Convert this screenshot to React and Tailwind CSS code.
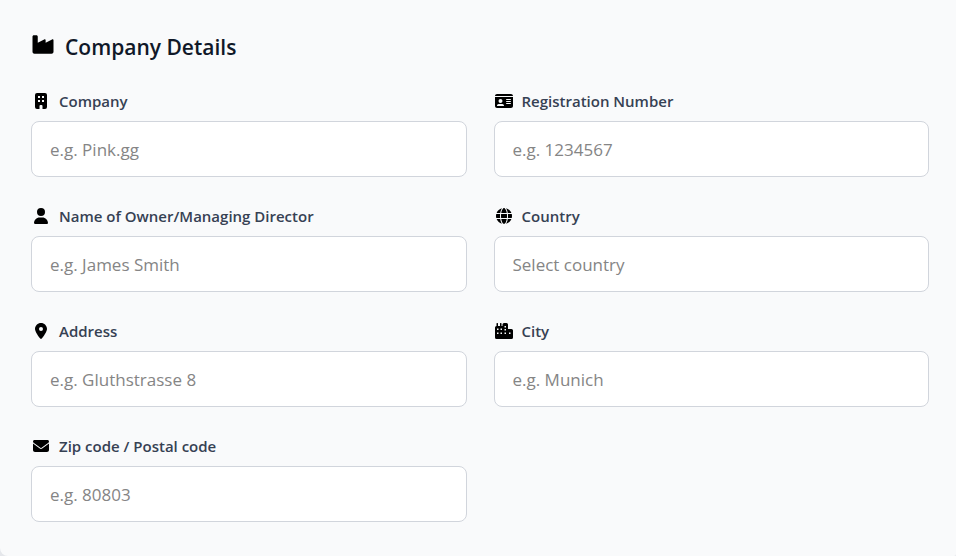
import { FaEnvelope, FaGlobe, FaIdCard, FaIndustry, FaLocationDot, FaUser } from "react-icons/fa6";

const BuildingIcon = ({ className }) => (
  <svg className={className} fill="currentColor" viewBox="0 0 12 16">
    <path
      d="M2 0h8a2 2 0 012 2v12a2 2 0 01-2 2H7.500v-3a1 1 0 00-1-1h-1a1 1 0 00-1 1v3H2a2 2 0 01-2-2V2a2 2 0 012-2zM3 3v2h2V3zm4 0v2h2V3zM3 7v2h2V7zm4 0v2h2V7z"
      fillRule="evenodd"
    />
  </svg>
);

const CityIcon = ({ className }) => (
  <svg className={className} fill="currentColor" viewBox="0 0 18 16">
    <path
      d="M1.500 3V.7a.7.7 0 011.500 0V3h2V.7a.7.7 0 011.500 0V3H7.500V1.500A1.500 1.500 0 019 0h2.500A1.500 1.500 0 0113 1.500V6h3.500A1.500 1.500 0 0118 7.500v7a1.500 1.500 0 01-1.500 1.500h-15A1.500 1.500 0 010 14.500v-10A1.500 1.500 0 011.500 3zM2 5.500V7h1.500V5.500zm3.500 0V7H7V5.500zM2 9.500V11h1.500V9.500zm3.500 0V11H7V9.500zM9.500 3v1.500H11V3zm0 3v1.500H11V6zm0 3.500V11H11V9.500zm4.500 0V11h1.500V9.500z"
      fillRule="evenodd"
    />
  </svg>
);

const fields = [
  { id: "company", label: "Company", placeholder: "e.g. Pink.gg", icon: BuildingIcon, size: "h-4 w-3" },
  { id: "registration", label: "Registration Number", placeholder: "e.g. 1234567", icon: FaIdCard, size: "h-4 w-[18px]" },
  { id: "owner", label: "Name of Owner/Managing Director", placeholder: "e.g. James Smith", icon: FaUser, size: "h-4 w-3.5" },
  { id: "country", label: "Country", placeholder: "Select country", icon: FaGlobe, size: "h-4 w-4" },
  { id: "address", label: "Address", placeholder: "e.g. Gluthstrasse 8", icon: FaLocationDot, size: "h-4 w-3" },
  { id: "city", label: "City", placeholder: "e.g. Munich", icon: CityIcon, size: "h-4 w-[18px]" },
  { id: "zip", label: "Zip code / Postal code", placeholder: "e.g. 80803", icon: FaEnvelope, size: "h-4 w-4" },
];

const Field = ({ id, label, placeholder, icon: Icon, size }) => (
  <div>
    <label className="flex h-6 items-center gap-2 text-[15px] font-semibold text-gray-700" htmlFor={id}>
      <span className="flex w-5 justify-center text-black">
        <Icon className={size} />
      </span>
      {label}
    </label>
    <input
      className="mt-2 h-14 w-full rounded-lg border border-gray-300 bg-white px-[18px] text-[17px] text-gray-900 placeholder:text-[#858585]"
      id={id}
      placeholder={placeholder}
      type="text"
    />
  </div>
);

const App = () => (
  <div className="bg-gray-200">
    <form className="min-h-screen rounded-br-xs rounded-bl-lg bg-gray-50 pt-8 pr-[27px] pl-[31px] font-['Open_Sans',sans-serif]">
      <h2 className="flex h-8 items-center gap-2.5 text-[21px] font-semibold text-gray-900">
        <FaIndustry className="mb-2 h-[21px] w-6 text-black" />
        Company Details
      </h2>
      <div className="mt-[25px] grid grid-cols-2 gap-[27px]">
        {fields.map((field) => (
          <Field key={field.id} {...field} />
        ))}
      </div>
    </form>
  </div>
);

export default App;
